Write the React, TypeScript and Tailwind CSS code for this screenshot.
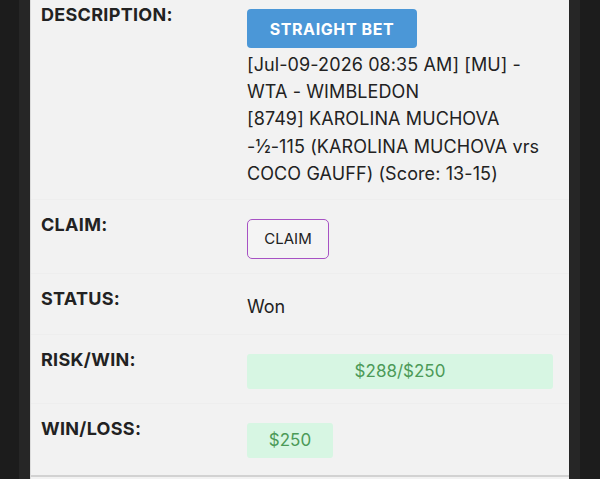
import React from "react";

type Row = { label: string; value: React.ReactNode; first?: boolean };

const Label = ({ text }: { text: string }) => (
  <div className="w-[206px] shrink-0 text-[18px] leading-[24px] font-bold tracking-[0.3px] text-[#222]">{text}</div>
);

export default function App() {
  const rows: Row[] = [
    {
      label: "DESCRIPTION:",
      first: true,
      value: (
        <div>
          <div className="inline-flex h-[39px] w-[170px] items-center justify-center rounded-[4px] bg-[#4b97d7] text-[16px] font-bold tracking-[0.6px] text-white">
            STRAIGHT BET
          </div>
          <div className="mt-[3px] text-[18px] leading-[27.2px] tracking-[0.1px] text-[#222]">
            [Jul-09-2026 08:35 AM] [MU] -<br />
            WTA - WIMBLEDON<br />
            [8749] KAROLINA MUCHOVA<br />
            -½-115 (KAROLINA MUCHOVA vrs<br />
            COCO GAUFF) (Score: 13-15)
          </div>
        </div>
      ),
    },
    {
      label: "CLAIM:",
      value: (
        <button className="flex h-[40px] w-[82px] items-center justify-center rounded-[5px] border-[1.5px] border-[#a752c4] bg-[#f4f4f4] text-[15px] text-[#222]">
          CLAIM
        </button>
      ),
    },
    {
      label: "STATUS:",
      value: <div className="text-[18px] leading-[27px] text-[#222]">Won</div>,
    },
    {
      label: "RISK/WIN:",
      value: (
        <div className="flex h-[35px] w-full items-center justify-center rounded-[3px] bg-[#d7f6e3] text-[17px] text-[#4c9a58]">
          $288/$250
        </div>
      ),
    },
    {
      label: "WIN/LOSS:",
      value: (
        <div className="flex h-[35px] w-[86px] items-center justify-center rounded-[3px] bg-[#d7f6e3] text-[17px] text-[#4c9a58]">
          $250
        </div>
      ),
    },
  ];

  return (
    <div
      className="flex h-[479px] w-[600px] overflow-hidden bg-[#1c1c1c]"
      style={{ fontFamily: "Inter, 'Noto Sans', sans-serif" }}
    >
      <div className="w-[19px] shrink-0" />
      <div className="w-[11px] shrink-0 bg-[#262626]" />
      <div className="flex w-[539px] shrink-0 flex-col border-l border-[#dcdcdc] bg-[#f2f2f2]">
        {rows.map((row) => (
          <div
            key={row.label}
            className={
              row.first
                ? "flex pt-[3px] pb-[12px] pl-[10px] pr-[16px]"
                : "flex border-t border-[#eeeeee] pt-[13px] pb-[14px] pl-[10px] pr-[16px]"
            }
          >
            <Label text={row.label} />
            <div className="mt-[6px] flex-1">{row.value}</div>
          </div>
        ))}
        <div className="mt-[3px] h-[2px] bg-[#d2d2d2]" />
      </div>
      <div className="w-[11px] shrink-0 bg-[#262626]" />
    </div>
  );
}
